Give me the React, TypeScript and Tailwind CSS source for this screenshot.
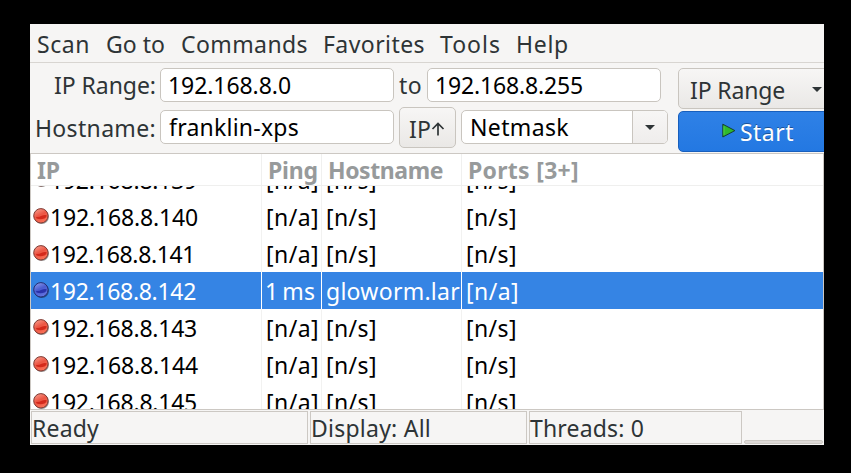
import { useLayoutEffect, useRef, useState } from "react";
import clsx from "clsx";

/* Text whose tracking is adjusted so that it occupies a given width. */
function Fit({ text, w, className }: { text: string; w: number; className?: string }) {
  const ref = useRef<HTMLSpanElement>(null);
  const [spacing, setSpacing] = useState(0);
  useLayoutEffect(() => {
    if (!ref.current) return;
    const natural = ref.current.getBoundingClientRect().width - spacing * text.length;
    setSpacing((w - natural) / text.length);
  }, [text, w]);
  return (
    <span ref={ref} className={clsx("inline-block shrink-0 whitespace-pre", className)} style={{ letterSpacing: spacing }}>
      {text}
    </span>
  );
}

const menus = [
  { text: "Scan", w: 53, gap: "ml-[7px]" },
  { text: "Go to", w: 59, gap: "ml-[16px]" },
  { text: "Commands", w: 127, gap: "ml-[16px]" },
  { text: "Favorites", w: 102, gap: "ml-[15px]" },
  { text: "Tools", w: 61, gap: "ml-[15px]" },
  { text: "Help", w: 53, gap: "ml-[15px]" },
];

const rows = [
  { ip: "192.168.8.139", w: 147 },
  { ip: "192.168.8.140", w: 148 },
  { ip: "192.168.8.141", w: 145 },
  { ip: "192.168.8.142", w: 146 },
  { ip: "192.168.8.143", w: 147 },
  { ip: "192.168.8.144", w: 148 },
  { ip: "192.168.8.145", w: 147 },
].map((r) => ({ ...r, alive: r.ip.endsWith("142") }));

function Ball({ blue }: { blue?: boolean }) {
  const id = blue ? "ball-blue" : "ball-red";
  return (
    <svg viewBox="0 0 16 16" className="mt-[10px] h-4 w-4 shrink-0">
      <defs>
        <linearGradient id={id} x1="0.2" y1="0" x2="0.7" y2="1">
          <stop offset="0" stopColor={blue ? "#8d9bea" : "#f79c8c"} />
          <stop offset="0.45" stopColor={blue ? "#4a5cd0" : "#ec5644"} />
          <stop offset="1" stopColor={blue ? "#6676e0" : "#fb7258"} />
        </linearGradient>
      </defs>
      <circle cx="8.7" cy="8.8" r="7.2" fill="#000" opacity="0.4" />
      <circle cx="7.9" cy="7.8" r="7.2" fill={`url(#${id})`} stroke={blue ? "#232b6e" : "#7c3a33"} strokeWidth="1" />
      <path d="M3 9 Q6 9.4 8 8 Q11 6.6 13.8 7.2 Q13.6 9.4 11.5 10.6 Q7.5 11.8 3.6 10.6 Z" fill={blue ? "#1c219c" : "#c9180c"} opacity="0.75" />
    </svg>
  );
}

function Caret({ className }: { className?: string }) {
  return (
    <svg viewBox="0 0 10 5" className={clsx("h-[5px] w-[10px] shrink-0", className)}>
      <path d="M0 0H10L5 5Z" fill="#2e3436" />
    </svg>
  );
}

const field = "box-border flex h-[34px] rounded-[5px] border border-[#c9c5bf] bg-white text-black leading-[33px]";
const button = "box-border flex h-[41px] border border-[#c9c5bf] bg-linear-to-b from-[#f7f6f5] to-[#eae8e6]";

export default function App() {
  return (
    <div className="h-[473px] w-[851px] overflow-hidden bg-black pt-6 pl-[30px] font-['Noto_Sans','DejaVu_Sans',sans-serif] text-[23px] text-[#2e3436]">
      <div className="flex h-[421px] w-[794px] flex-col overflow-hidden bg-[#f6f5f4]">
        <nav className="flex h-[39px] shrink-0 border-b border-[#d8d5d1] leading-[40px]">
          {menus.map((m) => (
            <Fit key={m.text} text={m.text} w={m.w} className={m.gap} />
          ))}
        </nav>

        <div className="flex h-[90px] shrink-0">
          <div className="flex w-[648px] shrink-0 flex-col">
            <div className="mt-[5px] flex h-[34px] leading-[34px]">
              <div className="flex w-[130px] shrink-0 justify-end pr-[4px]">
                <Fit text="IP Range:" w={102} />
              </div>
              <div className={clsx(field, "w-[234px] pl-[7px]")}>
                <Fit text="192.168.8.0" w={123} />
              </div>
              <Fit text="to" w={23} className="ml-[5px]" />
              <div className={clsx(field, "ml-[5px] w-[234px] pl-[7px]")}>
                <Fit text="192.168.8.255" w={148} />
              </div>
            </div>
            <div className="mt-[5px] flex h-[41px]">
              <div className="flex w-[130px] shrink-0 justify-end pr-[4px] leading-[43px]">
                <Fit text="Hostname:" w={121} />
              </div>
              <div className={clsx(field, "mt-[3px] w-[234px] pl-[8px]")}>
                <Fit text="franklin-xps" w={130} />
              </div>
              <div className={clsx(button, "ml-[5px] w-[57px] rounded-[5px] pl-[9px] leading-[42px]")}>
                <Fit text="IP" w={22} />
                <svg viewBox="0 0 14 14" className="mt-[14px] h-[14px] w-[14px]">
                  <path d="M7 13.5V1.5M1.5 7L7 1.5L12.5 7" fill="none" stroke="#2e3436" strokeWidth="1.7" />
                </svg>
              </div>
              <div className={clsx(field, "mt-[3px] ml-[5px] w-[207px] overflow-hidden")}>
                <div className="w-[170px] pl-[8px]">
                  <Fit text="Netmask" w={99} />
                </div>
                <div className="flex flex-1 items-center justify-center border-l border-[#c9c5bf] bg-linear-to-b from-[#f7f6f5] to-[#efedec]">
                  <Caret />
                </div>
              </div>
            </div>
          </div>
          <div className="flex w-[146px] shrink-0 flex-col overflow-hidden pt-[5px]">
            <div className={clsx(button, "w-[160px] shrink-0 rounded-l-[5px] pl-[11px] leading-[42px]")}>
              <Fit text="IP Range" w={95} />
              <Caret className="mt-[18px] ml-[27px]" />
            </div>
            <div className="mt-[2px] box-border flex h-[41px] w-[160px] shrink-0 rounded-l-[5px] border border-[#185fbd] bg-linear-to-b from-[#2f81e6] to-[#2378e2] pl-[43px] leading-[40px] text-white [text-shadow:0_-1px_0_rgba(0,0,0,0.35)]">
              <svg viewBox="0 0 14 15" className="mt-[11px] h-[15px] w-[14px] shrink-0">
                <path d="M0.8 1.2V14L12.9 7.6Z" fill="#2fb92c" stroke="#163d32" strokeWidth="1" />
                <path d="M2 3.2V11.8" stroke="#55cc48" strokeWidth="1" />
              </svg>
              <Fit text="Start" w={54} className="ml-[4px]" />
            </div>
          </div>
        </div>

        <div className="box-border flex h-[257px] shrink-0 flex-col overflow-hidden border border-[#ccc8c3] bg-white text-black">
          <div className="flex h-[32px] shrink-0 border-b border-[#efefee] leading-[33px] font-bold text-[#979a9b]">
            <div className="w-[231px] shrink-0 border-r border-[#f0f0ef] pl-[6px]">
              <Fit text="IP" w={23} />
            </div>
            <div className="w-[60px] shrink-0 border-r border-[#f0f0ef] pl-[6px]">
              <Fit text="Ping" w={50} />
            </div>
            <div className="w-[140px] shrink-0 border-r border-[#f0f0ef] pl-[6px]">
              <Fit text="Hostname" w={115} />
            </div>
            <div className="pl-[6px]">
              <Fit text="Ports [3+]" w={111} />
            </div>
          </div>
          <div className="flex min-h-0 flex-1 flex-col overflow-hidden">
            {rows.map((r, i) => (
              <div
                key={r.ip}
                className={clsx(
                  "flex h-[37px] shrink-0 leading-[39px]",
                  i === 0 && "-mt-[25px]",
                  r.alive ? "bg-[#3584e4] text-white" : "text-black",
                )}
              >
                <div className={clsx("flex w-[231px] shrink-0 border-r pl-[2px]", r.alive ? "border-white" : "border-[#f2f2f1]")}>
                  <Ball blue={r.alive} />
                  <Fit text={r.ip} w={r.w} className="ml-px" />
                </div>
                <div className={clsx("w-[60px] shrink-0 overflow-hidden border-r", r.alive ? "border-white pl-[3px]" : "border-[#f2f2f1] pl-[4px]")}>
                  {r.alive ? <Fit text="1 ms" w={50} className="[word-spacing:-2px]" /> : <Fit text="[n/a]" w={53} />}
                </div>
                <div className={clsx("w-[140px] shrink-0 overflow-hidden border-r pl-[4px]", r.alive ? "border-white" : "border-[#f2f2f1]")}>
                  {r.alive ? <Fit text="gloworm.lar" w={134} /> : <Fit text="[n/s]" w={51} />}
                </div>
                <div className="flex-1 pl-[4px]">
                  {r.alive ? <Fit text="[n/a]" w={53} /> : <Fit text="[n/s]" w={51} />}
                </div>
              </div>
            ))}
          </div>
        </div>

        <footer className="flex h-[35px] shrink-0 gap-[2px] pt-px pl-px leading-[32px]">
          <div className="box-border h-[33px] w-[277px] border border-[#ccc8c3]">
            <Fit text="Ready" w={67} />
          </div>
          <div className="box-border h-[33px] w-[217px] border border-[#ccc8c3]">
            <Fit text="Display: All" w={120} />
          </div>
          <div className="box-border h-[33px] w-[213px] border border-[#ccc8c3]">
            <Fit text="Threads: 0" w={114} />
          </div>
          <div className="mt-[29px] box-border h-[4px] w-[79px] rounded-[2px] border border-[#ccc8c3] bg-[#dedad7]" />
        </footer>
      </div>
    </div>
  );
}
